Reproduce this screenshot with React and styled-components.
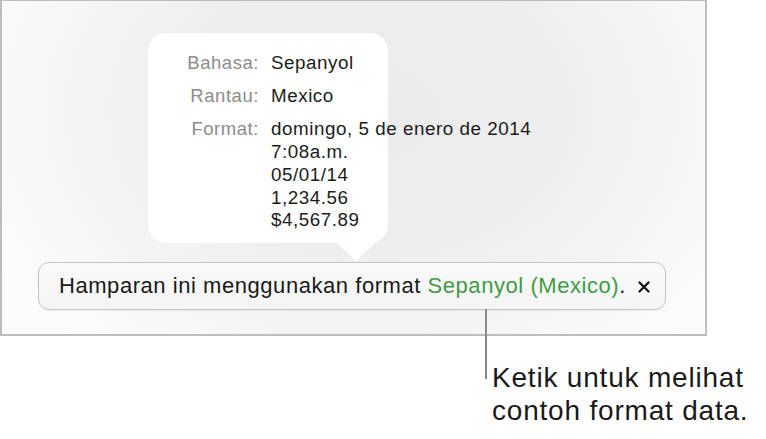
import React from "react";
import styled, { createGlobalStyle } from "styled-components";

const GlobalStyle = createGlobalStyle`
  html, body {
    margin: 0;
    padding: 0;
    background: #ffffff;
  }
  body {
    font-family: "Liberation Sans", Arial, Helvetica, sans-serif;
    -webkit-font-smoothing: antialiased;
  }
`;

const Page = styled.div`
  width: 766px;
  height: 439px;
  overflow: hidden;
  background: #ffffff;
`;

const Screen = styled.div`
  box-sizing: border-box;
  width: 707px;
  height: 336px;
  border: 2px solid #bdbdbd;
  border-top-width: 1px;
  background: radial-gradient(
    ellipse 430px 320px at 370px 110px,
    #ebebeb 0%,
    #eeeeee 45%,
    #f7f7f7 80%,
    #fcfcfc 100%
  );
  padding-top: 32px;
  display: flex;
  flex-direction: column;
`;

const Popover = styled.div`
  position: relative;
  box-sizing: border-box;
  width: 240px;
  height: 210px;
  margin-left: 146px;
  background: #ffffff;
  border-radius: 18px;
  padding: 19px 0 0 0;
  display: grid;
  grid-template-columns: 111px 1fr;
  column-gap: 12px;
  row-gap: 10.5px;
  align-content: start;

  &::after {
    content: "";
    position: absolute;
    left: 189px;
    top: 100%;
    width: 0;
    height: 0;
    border-left: 19px solid transparent;
    border-right: 19px solid transparent;
    border-top: 18px solid #ffffff;
  }
`;

const Label = styled.div`
  text-align: right;
  color: #8c8c8c;
  font-size: 18.5px;
  line-height: 22.7px;
  letter-spacing: 0.55px;
`;

const Value = styled.div`
  color: #1c1c1c;
  font-size: 18.8px;
  line-height: 22.7px;
  letter-spacing: 0.55px;
  white-space: nowrap;
`;

const Bar = styled.div`
  position: relative;
  box-sizing: border-box;
  width: 628px;
  height: 48px;
  margin: 19px 0 0 36px;
  border: 1px solid #c6c6c6;
  border-radius: 11px;
  background: linear-gradient(#f9f9f9, #f5f5f5);
  box-shadow: 0 1px 2px rgba(0, 0, 0, 0.06);
  display: flex;
  align-items: center;
  padding-left: 20px;
  gap: 12px;
`;

const Message = styled.span`
  color: #1a1a1a;
  font-size: 22px;
  letter-spacing: 0.55px;
  white-space: nowrap;
`;

const Locale = styled.span`
  color: #3f9b45;
`;

const Close = styled.svg`
  width: 12px;
  height: 12px;
  margin-top: 2px;
`;

const Leader = styled.div`
  position: absolute;
  left: 446px;
  top: 100%;
  width: 2px;
  height: 70px;
  background: #8a8a8a;
`;

const Caption = styled.div`
  margin: 26px 0 0 492px;
  color: #1a1a1a;
  font-size: 28px;
  line-height: 32.5px;
  letter-spacing: 0.8px;
  white-space: nowrap;
`;

const rows = [
  { label: "Bahasa:", values: ["Sepanyol"] },
  { label: "Rantau:", values: ["Mexico"] },
  {
    label: "Format:",
    values: [
      "domingo, 5 de enero de 2014",
      "7:08a.m.",
      "05/01/14",
      "1,234.56",
      "$4,567.89",
    ],
  },
];

export default function App() {
  return (
    <>
      <GlobalStyle />
      <Page>
        <Screen>
          <Popover>
            {rows.map((row) => (
              <React.Fragment key={row.label}>
                <Label>{row.label}</Label>
                <Value>
                  {row.values.map((v) => (
                    <div key={v}>{v}</div>
                  ))}
                </Value>
              </React.Fragment>
            ))}
          </Popover>
          <Bar>
            <Message>
              Hamparan ini menggunakan format{" "}
              <Locale>Sepanyol (Mexico)</Locale>.
            </Message>
            <Close viewBox="0 0 12 12">
              <path
                d="M1.5 1.5 L10.5 10.5 M10.5 1.5 L1.5 10.5"
                stroke="#1a1a1a"
                strokeWidth="2.4"
                strokeLinecap="round"
              />
            </Close>
            <Leader />
          </Bar>
        </Screen>
        <Caption>
          Ketik untuk melihat
          <br />
          contoh format data.
        </Caption>
      </Page>
    </>
  );
}
